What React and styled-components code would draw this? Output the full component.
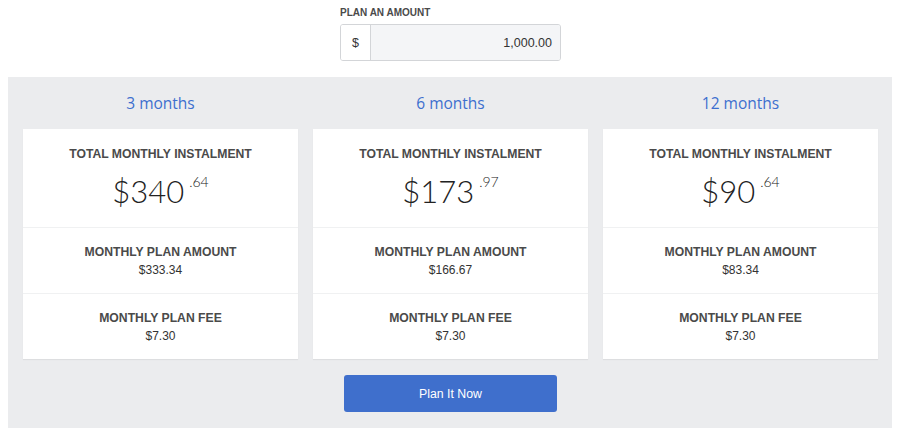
import React from "react";
import styled, { createGlobalStyle } from "styled-components";

const Global = createGlobalStyle`
  body { margin: 8px; background: #fff; font-family: "Liberation Sans", Arial, sans-serif; color: #444; }
  * { box-sizing: border-box; }
`;

const Top = styled.div`
  display: flex;
  justify-content: center;
  padding-left: 1px;
`;

const Field = styled.div`
  width: 221px;
  display: flex;
  flex-direction: column;
`;

const FieldLabel = styled.div`
  font-size: 10px;
  font-weight: bold;
  color: #4a4a4a;
  height: 16px;
  line-height: 10px;
`;

const InputGroup = styled.div`
  display: flex;
  height: 37px;
  border: 1px solid #d3d5d8;
  border-radius: 3px;
  overflow: hidden;
`;

const Prefix = styled.div`
  width: 30px;
  display: flex;
  align-items: center;
  justify-content: center;
  background: #fff;
  border-right: 1px solid #d3d5d8;
  font-size: 12.5px;
  color: #333;
`;

const Value = styled.div`
  flex: 1;
  display: flex;
  align-items: center;
  justify-content: flex-end;
  padding-right: 8px;
  background: #f4f5f7;
  font-size: 12.5px;
  color: #333;
`;

const Panel = styled.div`
  margin-top: 16px;
  width: 885px;
  background: #ebecee;
  padding: 0 15px 16px;
  display: flex;
  flex-direction: column;
  align-items: center;
`;

const Columns = styled.div`
  width: 100%;
  display: grid;
  grid-template-columns: repeat(3, 1fr);
  gap: 15px;
`;

const Column = styled.div`
  display: flex;
  flex-direction: column;
`;

const Term = styled.div`
  height: 52px;
  display: flex;
  align-items: center;
  justify-content: center;
  font-family: "Open Sans", sans-serif;
  font-size: 15.5px;
  color: #3d6fcf;
`;

const Card = styled.div`
  background: #fff;
  box-shadow: 0 1px 1px rgba(0, 0, 0, 0.06);
`;

const Section = styled.div`
  height: ${(p) => p.$h}px;
  display: flex;
  flex-direction: column;
  align-items: center;
  padding-top: ${(p) => p.$pt}px;
  border-top: ${(p) => (p.$first ? "none" : "1px solid #f0f1f2")};
`;

const Label = styled.div`
  font-size: 12.2px;
  font-weight: bold;
  color: #4a4a4a;
  line-height: 16px;
`;

const Amount = styled.div`
  font-size: 12px;
  color: #333;
  line-height: 16px;
  margin-top: 2px;
`;

const Price = styled.div`
  margin-top: 11px;
  display: flex;
  align-items: flex-start;
  font-family: "Lato", sans-serif;
  font-weight: 300;
  color: #222;
`;

const Whole = styled.span`
  font-size: 31px;
  line-height: 36px;
`;

const Cents = styled.span`
  font-size: 14px;
  line-height: 16px;
  margin-left: 5px;
  margin-top: 1px;
`;

const Button = styled.button`
  margin-top: 16px;
  width: 213px;
  height: 37px;
  border: none;
  border-radius: 3px;
  background: #3f6fcc;
  color: #fff;
  font-family: "Liberation Sans", Arial, sans-serif;
  font-size: 12.3px;
`;

const plans = [
  { term: "3 months", whole: "$340", cents: ".64", amount: "$333.34", fee: "$7.30" },
  { term: "6 months", whole: "$173", cents: ".97", amount: "$166.67", fee: "$7.30" },
  { term: "12 months", whole: "$90", cents: ".64", amount: "$83.34", fee: "$7.30" },
];

export default function App() {
  return (
    <>
      <Global />
      <Top>
        <Field>
          <FieldLabel>PLAN AN AMOUNT</FieldLabel>
          <InputGroup>
            <Prefix>$</Prefix>
            <Value>1,000.00</Value>
          </InputGroup>
        </Field>
      </Top>
      <Panel>
        <Columns>
          {plans.map((p) => (
            <Column key={p.term}>
              <Term>{p.term}</Term>
              <Card>
                <Section $first $h={98} $pt={17}>
                  <Label>TOTAL MONTHLY INSTALMENT</Label>
                  <Price>
                    <Whole>{p.whole}</Whole>
                    <Cents>{p.cents}</Cents>
                  </Price>
                </Section>
                <Section $h={66} $pt={16}>
                  <Label>MONTHLY PLAN AMOUNT</Label>
                  <Amount>{p.amount}</Amount>
                </Section>
                <Section $h={66} $pt={16}>
                  <Label>MONTHLY PLAN FEE</Label>
                  <Amount>{p.fee}</Amount>
                </Section>
              </Card>
            </Column>
          ))}
        </Columns>
        <Button>Plan It Now</Button>
      </Panel>
    </>
  );
}
